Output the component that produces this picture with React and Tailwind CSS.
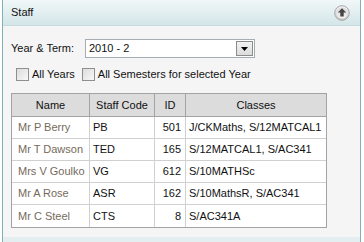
export default function App() {
  const rows = [
    ["Mr P Berry", "PB", "501", "J/CKMaths, S/12MATCAL1"],
    ["Mr T Dawson", "TED", "165", "S/12MATCAL1, S/AC341"],
    ["Mrs V Goulko", "VG", "612", "S/10MATHSc"],
    ["Mr A Rose", "ASR", "162", "S/10MathsR, S/AC341"],
    ["Mr C Steel", "CTS", "8", "S/AC341A"],
  ];
  return (
    <div className="w-[364px] h-[242px] bg-white overflow-hidden flex pl-[2px] font-['Liberation_Sans',Arial,sans-serif] text-[11px] text-black">
      <div className="w-[359px] h-full flex flex-col border-x border-[#7fb1b9]">
        <div className="h-[26px] shrink-0 flex items-center justify-between pl-[8px] pr-[10px] bg-gradient-to-b from-[#f1f7f8] to-[#d4e6e9] border-b border-[#c6dadd]">
          <span className="text-[11px] text-[#111]">Staff</span>
          <svg width="16" height="16" viewBox="0 0 16 16">
            <defs>
              <linearGradient id="g1" x1="0" y1="0" x2="0" y2="1">
                <stop offset="0" stopColor="#f6f6f6" />
                <stop offset="1" stopColor="#c4c4c4" />
              </linearGradient>
              <linearGradient id="g2" x1="0" y1="0" x2="0" y2="1">
                <stop offset="0" stopColor="#d8d8d8" />
                <stop offset="1" stopColor="#f2f2f2" />
              </linearGradient>
            </defs>
            <circle cx="8" cy="8" r="7.3" fill="url(#g1)" stroke="#a6a6a6" strokeWidth="1" />
            <circle cx="8" cy="8" r="5.6" fill="url(#g2)" />
            <path d="M8 3.3 L12.2 7.6 L9.7 7.6 L9.7 11.5 L6.3 11.5 L6.3 7.6 L3.8 7.6 Z" fill="#454545" />
          </svg>
        </div>
        <div className="flex-1 bg-[#f5f5f5] flex flex-col pt-[13px]">
          <div className="flex items-center pl-[8px]">
            <div className="w-[74px] text-[#111]">Year &amp; Term:</div>
            <div className="w-[170px] h-[19px] bg-white border border-[#a5acb2] flex items-center justify-between pl-[3px] pr-[1px]">
              <span className="text-[#111]">2010 - 2</span>
              <div className="w-[17px] h-[15px] border border-[#8a8c8e] bg-gradient-to-b from-[#f2f2f2] to-[#dcdcdc] flex items-center justify-center">
                <svg width="7" height="4" viewBox="0 0 7 4">
                  <path d="M0 0 L7 0 L3.5 4 Z" fill="#000" />
                </svg>
              </div>
            </div>
          </div>
          <div className="flex items-center pl-[13px] mt-[10px] h-[13px]">
            <div className="w-[13px] h-[13px] border border-[#8f8f8f] bg-gradient-to-br from-[#dcdcdc] to-[#f8f8f8]" />
            <span className="ml-[3px] text-[#111]">All Years</span>
            <div className="ml-[7px] w-[13px] h-[13px] border border-[#8f8f8f] bg-gradient-to-br from-[#dcdcdc] to-[#f8f8f8]" />
            <span className="ml-[3px] text-[#111]">All Semesters for selected Year</span>
          </div>
          <div className="ml-[8px] mt-[12px] w-[316px] border border-[#a3a3a3] bg-white">
            <div className="flex h-[23px] bg-[#dcdcdc] border-b border-[#a3a3a3] text-[#111]">
              <div className="w-[78px] border-r border-[#a3a3a3] flex items-center justify-center">Name</div>
              <div className="w-[65px] border-r border-[#a3a3a3] flex items-center justify-center">Staff Code</div>
              <div className="w-[31px] border-r border-[#a3a3a3] flex items-center justify-center">ID</div>
              <div className="w-[140px] flex items-center justify-center">Classes</div>
            </div>
            {rows.map((r, i) => (
              <div key={i} className={"flex h-[22px] " + (i < rows.length - 1 ? "border-b border-[#d0d0d0]" : "")}>
                <div className="w-[78px] border-r border-[#d0d0d0] flex items-center pl-[6px] text-[#756a5c]">{r[0]}</div>
                <div className="w-[65px] border-r border-[#d0d0d0] flex items-center pl-[3px] text-[#111]">{r[1]}</div>
                <div className="w-[31px] border-r border-[#d0d0d0] flex items-center justify-end pr-[4px] text-[#111]">{r[2]}</div>
                <div className="w-[140px] flex items-center pl-[3px] text-[#111]">{r[3]}</div>
              </div>
            ))}
          </div>
        </div>
        <div className="h-[5px] shrink-0 bg-[#e4eef0]" />
      </div>
    </div>
  );
}
